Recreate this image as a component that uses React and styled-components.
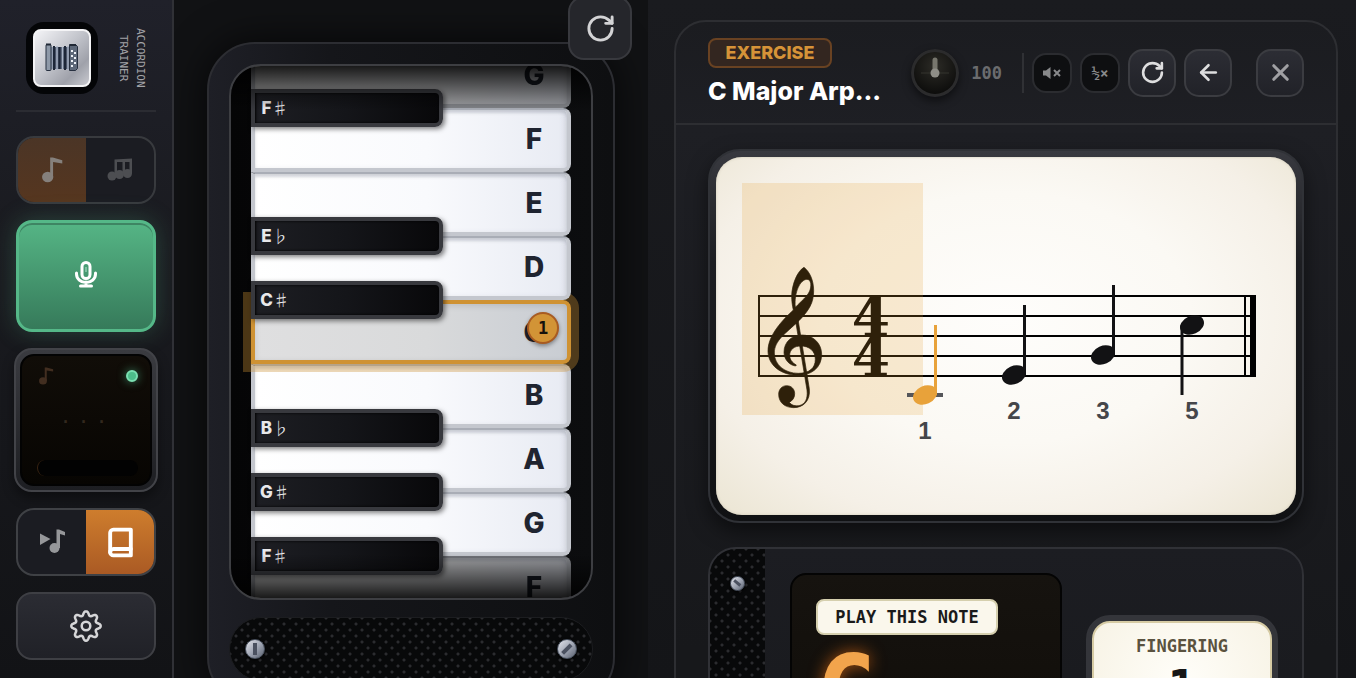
import React from "react";
import styled, { createGlobalStyle, css } from "styled-components";
import { ArrowLeft, RotateCw, X } from "lucide-react";
import { FiBook } from "react-icons/fi";

const GlobalStyle = createGlobalStyle`
  * {
    box-sizing: border-box;
  }
  body {
    margin: 0;
    background: #111214;
    color: #ffffff;
    font-family: Inter, "Liberation Sans", sans-serif;
  }
  button {
    font: inherit;
    color: inherit;
    cursor: pointer;
    padding: 0;
  }
`;

const mono = css`
  font-family: "DejaVu Sans Mono", "Liberation Mono", monospace;
`;

const mesh = css`
  background-color: #08090a;
  background-image: radial-gradient(circle, #2b2c2f 1px, transparent 2px),
    radial-gradient(circle, #2b2c2f 1px, transparent 2px);
  background-size: 12px 12px;
  background-position: 0 0, 6px 6px;
`;

const Page = styled.div`
  display: grid;
  grid-template-columns: 174px minmax(440px, 474fr) minmax(560px, 708fr);
  height: 100vh;
  overflow: hidden;
`;

/* sidebar */

const Sidebar = styled.aside`
  display: flex;
  flex-direction: column;
  gap: 16px;
  padding: 22px 16px 16px;
  border-right: 2px solid #303136;
  background: linear-gradient(180deg, #20212a 0%, #1a1b20 35%, #121316 100%);
  overflow: hidden;
`;

const Brand = styled.div`
  display: flex;
  align-items: center;
  justify-content: space-between;
  height: 90px;
  padding: 0 7px 16px 10px;
  border-bottom: 2px solid #2b2c32;
  margin-bottom: 8px;
`;

const LogoTile = styled.div`
  display: flex;
  width: 72px;
  height: 72px;
  padding: 7px;
  border-radius: 18px;
  background: #040507;
`;

const LogoFace = styled.div`
  flex: 1;
  border: 2px solid #f4f4f6;
  border-radius: 8px;
  background: linear-gradient(135deg, #f4f4f7 0%, #c3c5cc 45%, #9fa1aa 75%, #c9cad0 100%);
  svg {
    display: block;
    width: 100%;
    height: 100%;
  }
`;

const BrandName = styled.div`
  ${mono}
  writing-mode: vertical-rl;
  font-size: 11px;
  line-height: 17px;
  text-align: center;
  color: #a3a3a7;
`;

const Segmented = styled.div`
  display: flex;
  flex: none;
  height: 68px;
  border: 2px solid ${(props) => (props.$dim ? "#383a3e" : "#3f4145")};
  border-radius: 18px;
  background: #1b1c22;
  overflow: hidden;
`;

const Segment = styled.button`
  flex: 1;
  display: flex;
  align-items: center;
  justify-content: center;
  border: 0;
  background: ${(props) => props.$fill || "transparent"};
  color: ${(props) => props.$ink};
`;

const MicButton = styled.button`
  flex: none;
  display: flex;
  align-items: center;
  justify-content: center;
  height: 112px;
  padding-bottom: 4px;
  border: 3px solid #55b888;
  border-radius: 16px;
  background: linear-gradient(180deg, #55b585 0%, #367a5a 100%);
  box-shadow: 0 0 24px rgba(85, 184, 136, 0.28), inset 0 2px 0 #3e8563;
`;

const Monitor = styled.section`
  flex: none;
  height: 144px;
  margin: 0 -2px;
  padding: 4px;
  border: 2px solid #424348;
  border-radius: 18px;
  background: linear-gradient(180deg, #3a3b40 0%, #1d1e22 100%);
  box-shadow: 0 6px 12px rgba(0, 0, 0, 0.4);
`;

const MonitorScreen = styled.div`
  display: flex;
  flex-direction: column;
  justify-content: space-between;
  height: 100%;
  padding: 12px 12px 8px 15px;
  border: 2px solid #030303;
  border-radius: 14px;
  background: linear-gradient(180deg, #110d08 0%, #070502 100%);
`;

const MonitorTop = styled.div`
  display: flex;
  align-items: center;
  justify-content: space-between;
  height: 16px;
  color: #422e20;
`;

const Led = styled.span`
  width: 12px;
  height: 12px;
  border: 2px solid #7be0b2;
  border-radius: 50%;
  background: #4cbd8a;
  box-shadow: 0 0 10px rgba(85, 200, 150, 0.6);
`;

const Waiting = styled.div`
  ${mono}
  font-size: 15px;
  font-weight: 700;
  line-height: 16px;
  padding-right: 8px;
  text-align: center;
  color: #33281e;
`;

const Level = styled.div`
  height: 16px;
  border-left: 1px solid #3a2412;
  border-radius: 8px;
  background: #020202;
`;

const SettingsButton = styled.button`
  flex: none;
  display: flex;
  align-items: center;
  justify-content: center;
  height: 68px;
  border: 2px solid #3e3f44;
  border-radius: 16px;
  background: linear-gradient(180deg, #2b2c33 0%, #202127 100%);
  color: #d5d5d7;
`;

/* keyboard */

const Stage = styled.main`
  display: flex;
  flex-direction: column;
  align-items: center;
  padding-top: 42px;
  background: #111214;
  overflow: hidden;
`;

const Body = styled.div`
  position: relative;
  flex: none;
  width: 408px;
  padding: 20px 20px 22px;
  border: 2px solid #2c2d32;
  border-radius: 48px;
  background: linear-gradient(90deg, #1e1f26 0%, #15161a 30%, #0e0f11 100%);
  box-shadow: 0 0 40px rgba(0, 0, 0, 0.7);
`;

const Recenter = styled.button`
  position: absolute;
  top: -48px;
  right: -19px;
  z-index: 2;
  display: flex;
  align-items: center;
  justify-content: center;
  width: 64px;
  height: 64px;
  border: 2px solid #38393e;
  border-radius: 16px;
  background: #25262b;
  color: #d3d3d5;
`;

const KeyWindow = styled.div`
  position: relative;
  height: 536px;
  padding: 0 20px;
  border: 2px solid #3d3e42;
  border-radius: 32px;
  background: linear-gradient(90deg, #050506 0%, #0c0d0f 100%);
  overflow: hidden;
  isolation: isolate;
`;

const Keys = styled.div`
  display: flex;
  flex-direction: column;
  margin-top: -22px;
`;

const Slot = styled.div`
  position: relative;
  flex: none;
  height: 64px;
`;

const WhiteKey = styled.button`
  position: relative;
  z-index: ${(props) => props.$level};
  display: flex;
  align-items: center;
  justify-content: flex-end;
  width: 100%;
  height: 100%;
  padding-right: 16px;
  border: 4px solid #c4c7ce;
  border-top: 2px solid #a9adb6;
  border-radius: 0 8px 8px 0;
  background: linear-gradient(90deg, #ffffff 0%, #f9fafd 55%, #e8ebf3 100%);
  box-shadow: inset 0 3px 3px rgba(120, 125, 140, 0.3), inset -4px 0 4px rgba(120, 125, 140, 0.12);
  ${(props) => props.$dim && "filter: brightness(0.66);"}
  ${(props) =>
    props.$target &&
    css`
      border: 4px solid #cf9233;
      background: linear-gradient(90deg, #dfdfe0 0%, #d9dadb 55%, #c9cdd3 100%);
      box-shadow: 0 0 0 8px rgba(207, 146, 51, 0.35), inset 0 2px 6px rgba(0, 0, 0, 0.12);
    `}
`;

const KeyName = styled.span`
  width: 34px;
  font-size: 28px;
  font-weight: 800;
  line-height: 32px;
  text-align: center;
  color: #1f2430;
`;

const FingerBadge = styled.span`
  position: absolute;
  top: 8px;
  right: 8px;
  width: 32px;
  height: 32px;
  border: 2px solid #a85b22;
  border-radius: 50%;
  background: #d29436;
  box-shadow: 0 2px 4px rgba(0, 0, 0, 0.4);
  ${mono}
  font-size: 17px;
  font-weight: 700;
  line-height: 28px;
  text-align: center;
  color: #14110c;
`;

const BlackKey = styled.button`
  position: absolute;
  top: -19px;
  left: 0;
  z-index: 20;
  display: flex;
  align-items: center;
  width: 192px;
  height: 38px;
  border: 4px solid #38393e;
  border-radius: 0 8px 8px 0;
  background: linear-gradient(90deg, #1d1e23 0%, #141519 50%, #08080a 100%);
  box-shadow: 2px 2px 5px rgba(0, 0, 0, 0.5), inset 1px 0 3px #000;
`;

const BlackName = styled.span`
  display: flex;
  justify-content: center;
  width: 40px;
  font-size: 17px;
  font-weight: 800;
  line-height: 24px;
  color: #e8e8ea;
`;

const Accidental = styled.span`
  font-family: "Noto Sans CJK JP", sans-serif;
  font-size: 17px;
  font-weight: 300;
`;

const Fade = styled.div`
  position: absolute;
  left: 0;
  right: 0;
  ${(props) => props.$side}: 0;
  z-index: 30;
  height: 44px;
  background: linear-gradient(
    to ${(props) => (props.$side === "top" ? "bottom" : "top")},
    rgba(0, 0, 0, 0.85),
    transparent
  );
  pointer-events: none;
`;

const Grille = styled.div`
  ${mesh}
  display: flex;
  align-items: center;
  justify-content: space-between;
  height: 64px;
  margin-top: 17px;
  padding: 0 15px;
  border: 1px solid #1c1d20;
  border-radius: 32px;
`;

const Screw = styled.span`
  display: flex;
  align-items: center;
  justify-content: center;
  width: ${(props) => props.$size}px;
  height: ${(props) => props.$size}px;
  border: 1px solid #4a5260;
  border-radius: 50%;
  background: linear-gradient(135deg, #e4e6ed 0%, #9ba1af 55%, #59606e 100%);
  box-shadow: 0 1px 3px #000;
  &::after {
    content: "";
    width: 20%;
    height: 65%;
    background: #4b5160;
    transform: rotate(${(props) => props.$turn}deg);
  }
`;

/* lesson */

const Lesson = styled.section`
  padding: 20px 18px 0 26px;
  background: linear-gradient(180deg, #1a1b1f 0%, #141518 100%);
  overflow: hidden;
`;

const LessonPanel = styled.div`
  min-height: 900px;
  border: 2px solid #2d2e32;
  border-radius: 32px;
  background: linear-gradient(180deg, #1b1c20 0%, #1e1f24 12%, #17181b 70%);
`;

const Header = styled.header`
  display: flex;
  align-items: center;
  height: 103px;
  padding: 0 32px;
  border-bottom: 2px solid #2d2e32;
`;

const Heading = styled.div`
  flex: 1;
  min-width: 0;
`;

const Tag = styled.div`
  width: 124px;
  height: 30px;
  border: 2px solid #694222;
  border-radius: 8px;
  background: #332620;
  font-size: 18px;
  font-weight: 800;
  line-height: 26px;
  text-align: center;
  color: #d69338;
`;

const Title = styled.h1`
  margin: 6px 0 0;
  font-size: 25px;
  font-weight: 800;
  line-height: 34px;
  white-space: nowrap;
`;

const Tempo = styled.label`
  position: relative;
  display: flex;
  align-items: center;
  gap: 12px;
  margin-left: 16px;
  padding-right: 20px;
  ${mono}
  font-size: 17px;
  font-weight: 700;
  color: #6b6c6e;
  svg {
    border-radius: 50%;
    box-shadow: 0 4px 8px rgba(0, 0, 0, 0.5);
  }
`;

const TempoInput = styled.input`
  position: absolute;
  left: 0;
  width: 48px;
  height: 48px;
  margin: 0;
  opacity: 0;
`;

const Tools = styled.div`
  display: flex;
  align-items: center;
  gap: 8px;
`;

const Rule = styled.span`
  width: 2px;
  height: 40px;
  background: #303135;
`;

const SmallTool = styled.button`
  display: flex;
  align-items: center;
  justify-content: center;
  width: 40px;
  height: 40px;
  border: 2px solid #2b2c30;
  border-radius: 14px;
  background: #0e0f11;
  ${mono}
  font-size: 14px;
  font-weight: 700;
  color: #88898b;
`;

const Tool = styled.button`
  display: flex;
  align-items: center;
  justify-content: center;
  width: 48px;
  height: 48px;
  border: 2px solid #3b3c41;
  border-radius: 15px;
  background: linear-gradient(180deg, #2c2d34 0%, #212228 100%);
  color: ${(props) => (props.$muted ? "#a0a0a3" : "#dededf")};
  margin-left: ${(props) => (props.$apart ? 16 : 0)}px;
`;

const LessonBody = styled.div`
  display: flex;
  flex-direction: column;
  gap: 24px;
  padding: 24px 32px;
`;

const ScoreFrame = styled.div`
  padding: 6px;
  border: 2px solid #303237;
  border-radius: 32px;
  background: linear-gradient(180deg, #38393f 0%, #1d1e22 30%, #101113 100%);
  box-shadow: 0 8px 20px rgba(0, 0, 0, 0.5);
`;

const Paper = styled.div`
  padding: 26px;
  border-radius: 26px;
  background: radial-gradient(ellipse at 50% 45%, #fefdfb 0%, #fbf9f4 45%, #f5f0e7 75%, #ebe5d3 100%);
  box-shadow: inset 0 0 3px #cfc9b6;
  svg {
    display: block;
    width: 100%;
    height: auto;
  }
`;

const Guide = styled.div`
  display: flex;
  height: 260px;
  border: 2px solid #303136;
  border-radius: 28px;
  background: linear-gradient(180deg, #1c1d22 0%, #18191c 100%);
  overflow: hidden;
`;

const SideMesh = styled.div`
  ${mesh}
  flex: none;
  display: flex;
  align-items: flex-start;
  justify-content: center;
  width: 55px;
  padding-top: 27px;
`;

const GuideBody = styled.div`
  flex: 1;
  display: flex;
  align-items: flex-start;
  justify-content: space-between;
  gap: 24px;
  padding: 24px 24px 24px 25px;
`;

const NoteDisplay = styled.div`
  flex: 1;
  height: 220px;
  padding: 24px;
  border: 2px solid #040404;
  border-radius: 16px;
  background: linear-gradient(180deg, #16130f 0%, #0f0c08 100%);
`;

const NoteCaption = styled.div`
  width: 182px;
  height: 36px;
  border: 2px solid #d5cfae;
  border-radius: 8px;
  background: #faf7ec;
  ${mono}
  font-size: 17px;
  font-weight: 700;
  line-height: 32px;
  text-align: center;
  color: #1a1a1a;
`;

const NoteLetter = styled.div`
  ${mono}
  font-size: 100px;
  font-weight: 700;
  line-height: 116px;
  color: #f2a44c;
  text-shadow: 0 0 16px rgba(220, 105, 20, 0.75);
`;

const FingerCard = styled.div`
  width: 192px;
  margin-top: 42px;
  padding: 4px;
  border: 2px solid #34353a;
  border-radius: 24px;
  background: #34353a;
`;

const FingerFace = styled.div`
  height: 150px;
  padding-top: 12px;
  border: 2px solid #d6cba4;
  border-radius: 18px;
  background: radial-gradient(ellipse at 50% 40%, #fffef9 0%, #f6f1e2 100%);
  ${mono}
  font-weight: 700;
  text-align: center;
`;

const FingerLabel = styled.div`
  font-size: 17px;
  line-height: 22px;
  color: #5a523f;
`;

const FingerNumber = styled.div`
  font-size: 48px;
  line-height: 60px;
  color: #161616;
`;

const AccordionLogo = () => (
  <svg viewBox="0 0 54 54" aria-hidden="true">
    <path d="M16 16h18v22H16z" fill="#4a5468" />
    <path d="M19 15v24M24.500 16v22M30 15v24" stroke="#1d2738" strokeWidth="2" />
    <path d="M17 16v22M22 15v24M27.500 16v22M33 15v24" stroke="#a9b4c6" strokeWidth="1.500" />
    <rect x="11" y="13.500" width="5" height="26" rx="1" fill="#8e99a8" stroke="#273040" />
    <path d="M34.500 13.500h6l2 2v22l-2 2h-6z" fill="#5d6879" stroke="#273040" />
    <path
      d="M36 20h2M39 22h2M36 25h2M39 27h2M36 30h2M39 32h2M36 35h2"
      stroke="#eef2f7"
      strokeWidth="2"
    />
    <path d="M11 13.500h5M35 14h6" stroke="#212936" strokeWidth="2" />
  </svg>
);

const EighthNote = ({ size = 24 }) => (
  <svg width={size} height={size} viewBox="0 0 24 24" fill="currentColor" aria-hidden="true">
    <ellipse cx="8" cy="18.500" rx="5.200" ry="4.800" />
    <path d="M10.300 .5h2.500l8.700 2.500v3l-8.500-1.500V19h-2.700z" />
  </svg>
);

const ChordNotes = () => (
  <svg width="26" height="24" viewBox="0 0 26 24" fill="currentColor" aria-hidden="true">
    <circle cx="5" cy="18" r="4.500" />
    <circle cx="12.500" cy="16.500" r="4.500" />
    <circle cx="20.500" cy="15.500" r="4.500" />
    <path d="M7.500 1.500L25 .5v15h-2.500V4H18v11h-2.500V4H10v13H7.500z" />
  </svg>
);

const PlayNote = () => (
  <svg width="26" height="26" viewBox="0 0 26 26" fill="currentColor" aria-hidden="true">
    <path d="M1 4.500l10.500 5.500L1 16z" />
    <circle cx="15.500" cy="19" r="5" />
    <path d="M17.500 .5H20L26 3v3.500l-5-1.500v14h-3.500z" />
  </svg>
);

const MicIcon = () => (
  <svg width="24" height="28" viewBox="0 0 24 28" fill="none" stroke="#ffffff" aria-hidden="true">
    <rect x="8" y="2.500" width="8" height="16" rx="4" strokeWidth="3" />
    <path d="M12 7v5" stroke="#8fcdb0" strokeWidth="1.500" />
    <path
      d="M2.500 13v1a9.500 8.500 0 0 0 19 0v-1M12 22v4M6.500 26h11"
      strokeWidth="3"
      strokeLinecap="round"
    />
  </svg>
);

// eight soft teeth around the hub
const gearPath = Array.from({ length: 97 }, (_, i) => {
  const angle = (i / 96) * Math.PI * 2;
  const wave = Math.cos(angle * 8);
  const r = 12.7 + 2 * Math.sign(wave) * Math.pow(Math.abs(wave), 0.7);
  const x = 16 + r * Math.sin(angle);
  const y = 16 - r * Math.cos(angle);
  return `${i ? "L" : "M"}${x.toFixed(2)} ${y.toFixed(2)}`;
}).join("");

const GearIcon = () => (
  <svg
    width="32"
    height="32"
    viewBox="0 0 32 32"
    fill="none"
    stroke="currentColor"
    strokeWidth="2.500"
    strokeLinejoin="round"
    aria-hidden="true"
  >
    <path d={gearPath} />
    <circle cx="16" cy="16" r="4.300" />
  </svg>
);

const MuteIcon = () => (
  <svg width="20" height="14" viewBox="0 0 20 14" fill="currentColor" aria-hidden="true">
    <path d="M1 4.500h3l4.500-3.500v12L4 9.500H1z" />
    <path d="M12 4l6 6M18 4l-6 6" stroke="currentColor" strokeWidth="2" />
  </svg>
);

const Knob = () => (
  <svg width="48" height="48" viewBox="0 0 48 48" aria-hidden="true">
    <defs>
      <radialGradient id="knob" cx="50%" cy="35%" r="65%">
        <stop offset="0" stopColor="#2c2b26" />
        <stop offset="1" stopColor="#0b0b0a" />
      </radialGradient>
    </defs>
    <circle cx="24" cy="24" r="22.500" fill="url(#knob)" stroke="#2b2b2c" strokeWidth="3" />
    <path d="M10 24h28" stroke="#35342e" />
    <path d="M24 11v13" stroke="#77766d" strokeWidth="5" strokeLinecap="round" />
    <circle cx="24" cy="24" r="4.500" fill="#8f8e87" />
  </svg>
);

const scoreNotes = [
  { x: 183, y: 212, finger: 1, label: 256, color: "#e8a23a" },
  { x: 272, y: 192, finger: 2, label: 236 },
  { x: 361, y: 172, finger: 3, label: 236 },
  { x: 450, y: 142, finger: 5, label: 236, down: true },
];

const Score = () => (
  <svg viewBox="0 0 528 306" role="img" aria-label="C major arpeggio">
    <g stroke="#000000" strokeWidth="2">
      {[113, 133, 153, 173, 193].map((y) => (
        <line key={y} x1="16" x2="514" y1={y} y2={y} />
      ))}
      <line x1="17" x2="17" y1="112" y2="194" />
      <line x1="503" x2="503" y1="112" y2="194" />
      <line x1="511" x2="511" y1="112" y2="194" strokeWidth="6" />
    </g>
    {/* treble clef */}
    <g transform="translate(-12 57) scale(0.3333)" stroke="#000000" strokeWidth="2">
      <path
        fillRule="evenodd"
        d="M222 82C240 96 251 122 251 152C251 188 238 210 207 242C165 282 133 302 133 339C133 375 165 400 205 400C237 400 256 385 256 358C256 333 238 318 212 318C194 318 179 328 179 346C179 358 186 368 199 375L197 378C178 376 162 358 162 337C162 305 186 285 216 285C248 285 275 309 275 343C275 383 245 406 205 406C152 406 114 375 114 333C114 285 158 240 190 210C187 197 185 183 185 167C186 133 202 93 222 82ZM196 202C192 157 210 119 231 118C244 119 245 138 239 153C232 170 213 184 196 202Z"
      />
      <path d="M196 238L231 450C234 477 226 493 207 497C196 499 184 496 178 487C188 481 194 474 194 461C194 447 184 437 170 437C156 437 146 448 146 463C146 487 164 503 191 503C220 503 242 482 238 446L203 232Z" />
    </g>
    <g fontFamily="DejaVu Serif" fontWeight="700" fontSize="55" textAnchor="middle">
      <text x="129" y="153">4</text>
      <text x="129" y="193">4</text>
    </g>
    <rect width="181" height="232" fill="#e8a030" fillOpacity="0.2" />
    <line x1="165" x2="201" y1="212" y2="212" stroke="#55565a" strokeWidth="4" />
    {scoreNotes.map((note) => (
      <g key={note.x} fill={note.color || "#121214"}>
        <ellipse
          cx={note.x}
          cy={note.y}
          rx="12.500"
          ry="9"
          transform={`rotate(-24 ${note.x} ${note.y})`}
        />
        <line
          x1={note.x + (note.down ? -10 : 10.500)}
          x2={note.x + (note.down ? -10 : 10.500)}
          y1={note.y}
          y2={note.y + (note.down ? 70 : -70)}
          stroke={note.color || "#121214"}
          strokeWidth="3"
        />
        <text
          x={note.x}
          y={note.label}
          fill="#45464a"
          fontFamily="Liberation Sans"
          fontSize="24"
          fontWeight="700"
          textAnchor="middle"
        >
          {note.finger}
        </text>
      </g>
    ))}
  </svg>
);

const keys = [
  { name: "G", dim: true },
  { name: "F", black: ["F", "♯"] },
  { name: "E" },
  { name: "D", black: ["E", "♭"] },
  { name: "C", black: ["C", "♯"], finger: 1 },
  { name: "B" },
  { name: "A", black: ["B", "♭"] },
  { name: "G", black: ["G", "♯"] },
  { name: "F", black: ["F", "♯"], dim: true },
];

const Keyboard = () => (
  <KeyWindow>
    <Keys>
      {keys.map((key, index) => (
        <Slot key={index}>
          <WhiteKey $level={keys.length - index} $dim={key.dim} $target={key.finger}>
            <KeyName>{key.name}</KeyName>
            {key.finger && <FingerBadge>{key.finger}</FingerBadge>}
          </WhiteKey>
          {key.black && (
            <BlackKey>
              <BlackName>
                {key.black[0]}
                <Accidental>{key.black[1]}</Accidental>
              </BlackName>
            </BlackKey>
          )}
        </Slot>
      ))}
    </Keys>
    <Fade $side="top" />
    <Fade $side="bottom" />
  </KeyWindow>
);

const App = () => (
  <>
    <GlobalStyle />
    <Page>
      <Sidebar>
        <Brand>
          <LogoTile>
            <LogoFace>
              <AccordionLogo />
            </LogoFace>
          </LogoTile>
          <BrandName>
            ACCORDION
            <br />
            TRAINER
          </BrandName>
        </Brand>
        <Segmented $dim>
          <Segment
            aria-label="Single notes"
            $fill="linear-gradient(180deg, #4b3526, #56361f)"
            $ink="#85807c"
          >
            <EighthNote size={26} />
          </Segment>
          <Segment aria-label="Chords" $ink="#4d4e52">
            <ChordNotes />
          </Segment>
        </Segmented>
        <MicButton aria-label="Microphone">
          <MicIcon />
        </MicButton>
        <Monitor>
          <MonitorScreen>
            <MonitorTop>
              <EighthNote size={18} />
              <Led />
            </MonitorTop>
            <Waiting>· · ·</Waiting>
            <Level />
          </MonitorScreen>
        </Monitor>
        <Segmented>
          <Segment aria-label="Free play" $ink="#96979a">
            <PlayNote />
          </Segment>
          <Segment
            aria-label="Lessons"
            $fill="linear-gradient(180deg, #ce7d2d, #aa5a24)"
            $ink="#ffffff"
          >
            <FiBook size={31} strokeWidth={3} />
          </Segment>
        </Segmented>
        <SettingsButton aria-label="Settings">
          <GearIcon />
        </SettingsButton>
      </Sidebar>

      <Stage>
        <Body>
          <Recenter aria-label="Recenter keyboard">
            <RotateCw size={31} strokeWidth={2.25} />
          </Recenter>
          <Keyboard />
          <Grille>
            <Screw $size={20} $turn={0} />
            <Screw $size={20} $turn={45} />
          </Grille>
        </Body>
      </Stage>

      <Lesson>
        <LessonPanel>
          <Header>
            <Heading>
              <Tag>EXERCISE</Tag>
              <Title>C Major Arp...</Title>
            </Heading>
            <Tempo>
              <TempoInput type="range" min="40" max="160" defaultValue="100" aria-label="Tempo" />
              <Knob />
              100
            </Tempo>
            <Tools>
              <Rule />
              <SmallTool aria-label="Mute">
                <MuteIcon />
              </SmallTool>
              <SmallTool>½×</SmallTool>
              <Tool aria-label="Restart">
                <RotateCw size={25} strokeWidth={2.5} />
              </Tool>
              <Tool aria-label="Back">
                <ArrowLeft size={25} strokeWidth={2.5} />
              </Tool>
              <Tool aria-label="Close" $muted $apart>
                <X size={27} strokeWidth={2.75} />
              </Tool>
            </Tools>
          </Header>
          <LessonBody>
            <ScoreFrame>
              <Paper>
                <Score />
              </Paper>
            </ScoreFrame>
            <Guide>
              <SideMesh>
                <Screw $size={15} $turn={-50} />
              </SideMesh>
              <GuideBody>
                <NoteDisplay>
                  <NoteCaption>PLAY THIS NOTE</NoteCaption>
                  <NoteLetter>C</NoteLetter>
                </NoteDisplay>
                <FingerCard>
                  <FingerFace>
                    <FingerLabel>FINGERING</FingerLabel>
                    <FingerNumber>1</FingerNumber>
                  </FingerFace>
                </FingerCard>
              </GuideBody>
            </Guide>
          </LessonBody>
        </LessonPanel>
      </Lesson>
    </Page>
  </>
);

export default App;
